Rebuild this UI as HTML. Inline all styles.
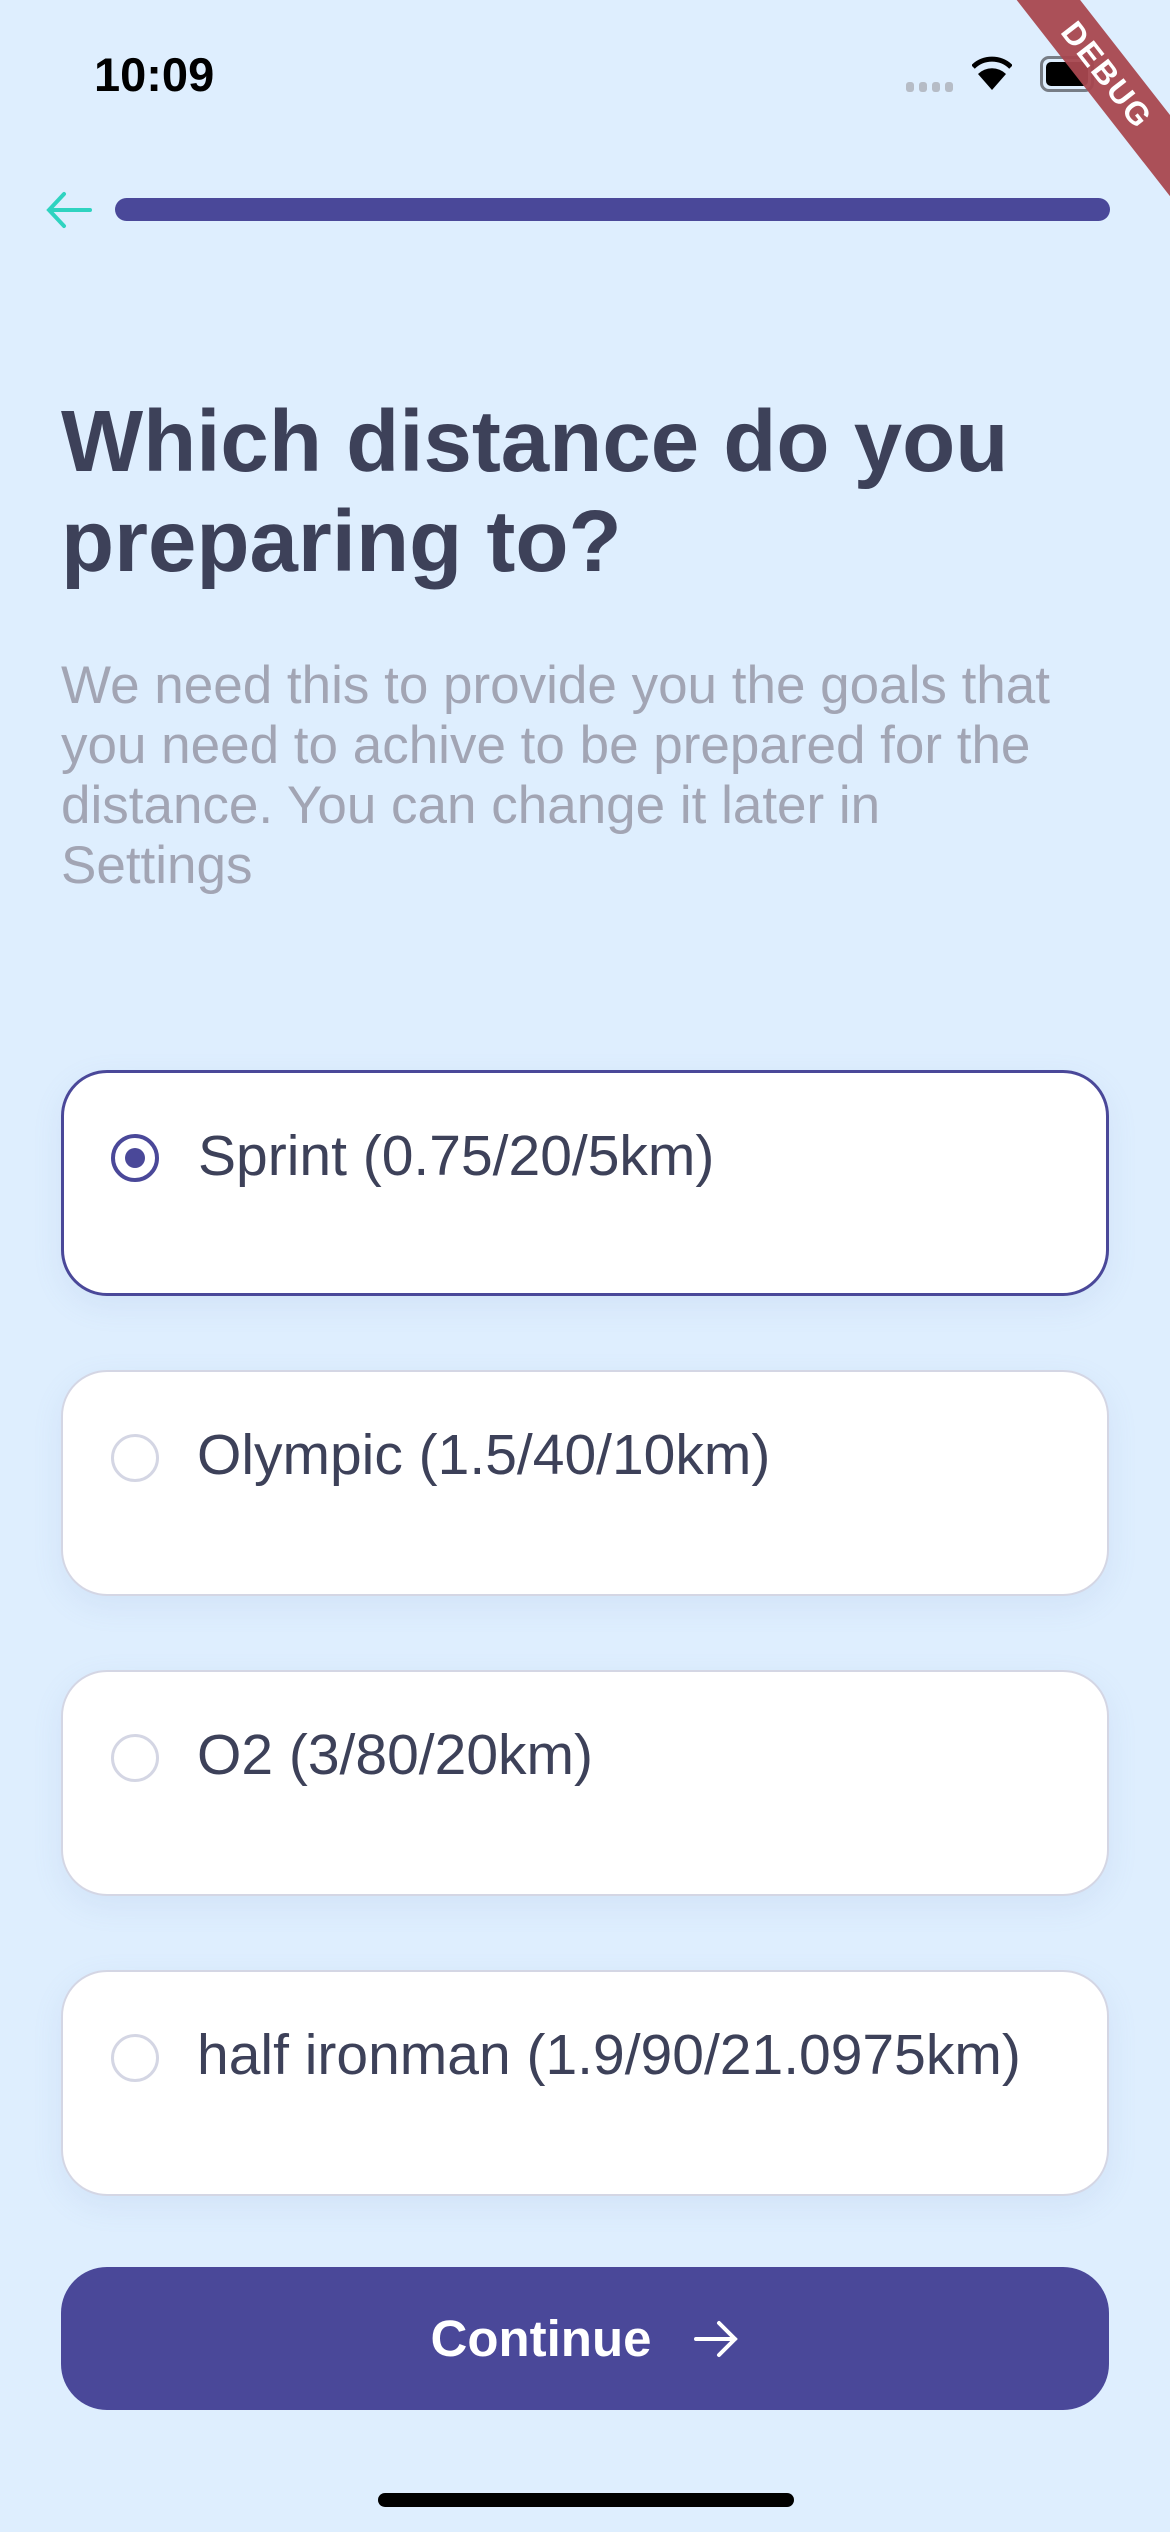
<!DOCTYPE html>
<html><head><meta charset="utf-8"><style>
*{margin:0;padding:0;box-sizing:border-box}
body{width:1170px;height:2532px;background:#deeefe;font-family:"Liberation Sans",sans-serif;position:relative;overflow:hidden}
.abs{position:absolute}
.time{left:94px;top:47px;font-size:47px;font-weight:bold;color:#000}
.title{left:61px;top:392px;font-size:87px;font-weight:bold;color:#3d4159;line-height:100px;width:1080px}
.sub{left:61px;top:656px;font-size:53px;color:#a2a5b4;line-height:60px;width:1000px}
.card{left:61px;width:1048px;height:226px;background:#fff;border:2px solid #d4d6e4;border-radius:46px;box-shadow:0 10px 30px rgba(120,150,200,0.12)}
.card.sel{border:3px solid #4a4899}
.radio{position:absolute;left:48px;top:62px;width:48px;height:48px;border-radius:50%;border:3px solid #d4d6e4}
.sel .radio{border:4px solid #4a4899;left:47px;top:61px}
.sel .radio:after{content:"";position:absolute;left:10px;top:10px;width:20px;height:20px;border-radius:50%;background:#4a4899}
.lbl{position:absolute;left:134px;top:50px;font-size:57px;color:#3d4159;line-height:66px}
.btn{left:61px;top:2267px;width:1048px;height:143px;background:#4a4899;border-radius:46px;color:#fff;font-size:51px;font-weight:bold;display:flex;align-items:center;justify-content:center}
</style></head><body>
<div class="abs time">10:09</div>
<div class="abs" style="left:906px;top:82px;display:flex;gap:5px">
<div style="width:8px;height:10px;background:#b6bcc6;border-radius:3px"></div><div style="width:8px;height:10px;background:#b6bcc6;border-radius:3px"></div><div style="width:8px;height:10px;background:#b6bcc6;border-radius:3px"></div><div style="width:8px;height:10px;background:#b6bcc6;border-radius:3px"></div></div>
<svg class="abs" style="left:972px;top:54px" width="40" height="38" viewBox="0 0 40 38"><path d="M20 36 L6 20 A20 20 0 0 1 34 20Z" fill="#000"/><path d="M1 13 A27 27 0 0 1 39 13" stroke="#000" stroke-width="5" fill="none"/></svg>
<div class="abs" style="left:1040px;top:56px;width:54px;height:36px;border:3px solid #777d86;border-radius:9px;padding:3px"><div style="width:100%;height:100%;background:#000;border-radius:5px"></div></div>
<div class="abs" style="width:380px;height:50px;background:rgba(168,71,79,0.95);transform:rotate(52deg);transform-origin:center;color:#fff;font-weight:bold;font-size:32px;text-align:center;line-height:50px;letter-spacing:2px;left:917px;top:50px">DEBUG</div>
<svg class="abs" style="left:44px;top:190px" width="50" height="40" viewBox="0 0 50 40"><path d="M46 20 H6 M20 4 L5 20 L20 36" stroke="#2fd3c0" stroke-width="4" fill="none" stroke-linecap="round"/></svg>
<div class="abs" style="left:115px;top:198px;width:995px;height:23px;background:#4a4899;border-radius:12px"></div>
<div class="abs title">Which distance do you preparing to?</div>
<div class="abs sub">We need this to provide you the goals that you need to achive to be prepared for the distance. You can change it later in Settings</div>
<div class="abs card sel" style="top:1070px"><div class="radio"></div><div class="lbl">Sprint (0.75/20/5km)</div></div>
<div class="abs card" style="top:1370px"><div class="radio"></div><div class="lbl">Olympic (1.5/40/10km)</div></div>
<div class="abs card" style="top:1670px"><div class="radio"></div><div class="lbl">O2 (3/80/20km)</div></div>
<div class="abs card" style="top:1970px"><div class="radio"></div><div class="lbl">half ironman (1.9/90/21.0975km)</div></div>
<div class="abs btn">Continue<svg style="margin-left:42px" width="46" height="40" viewBox="0 0 46 40"><path d="M3 20 H42 M26 4 L42 20 L26 36" stroke="#fff" stroke-width="4" fill="none" stroke-linecap="round"/></svg></div>
<div class="abs" style="left:378px;top:2493px;width:416px;height:14px;background:#000;border-radius:7px"></div>
</body></html>
